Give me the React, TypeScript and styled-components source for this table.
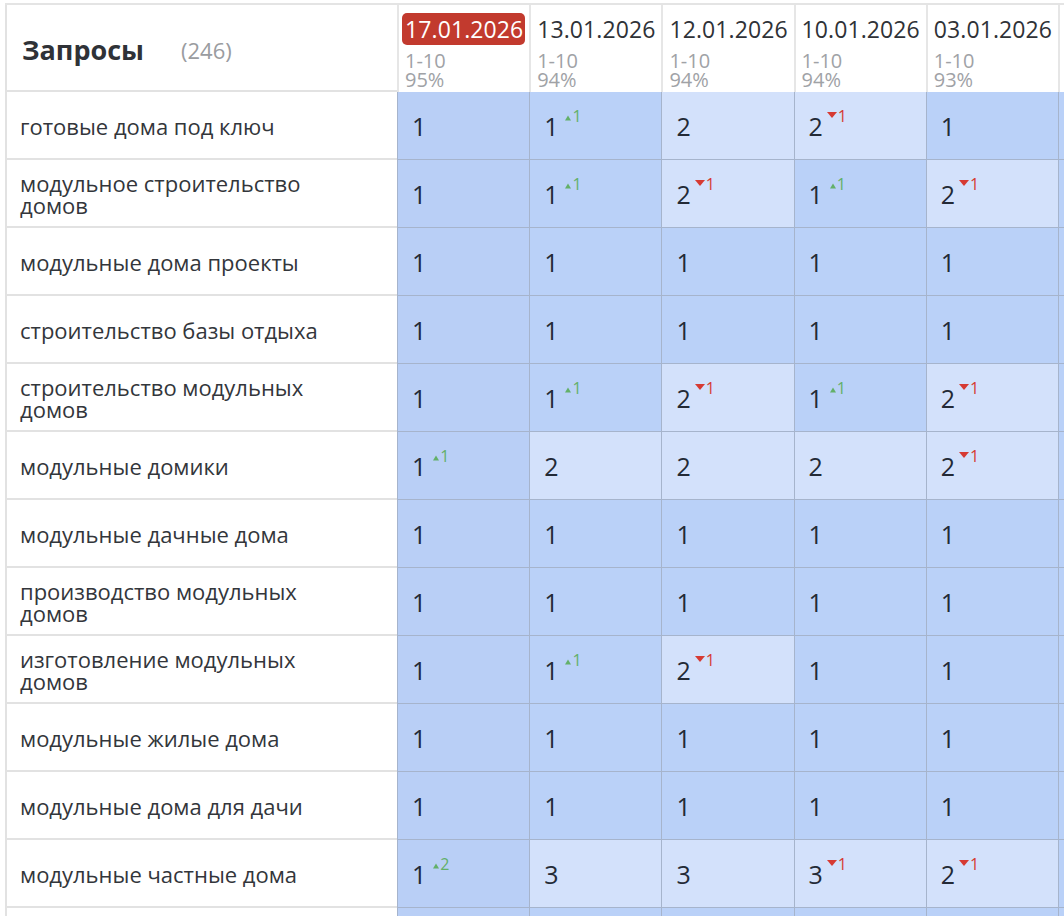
import React from "react";
import styled, { createGlobalStyle } from "styled-components";

const Global = createGlobalStyle`
  html, body { margin: 0; padding: 0; background: #ffffff; }
  body { font-family: "Open Sans", "Noto Sans", "DejaVu Sans", sans-serif; }
  * { box-sizing: border-box; }
`;

const Page = styled.div`
  width: 1064px;
  height: 916px;
  overflow: hidden;
  padding: 3px 0 0 5px;
`;

const Grid = styled.div`
  display: grid;
  grid-template-columns: 392px repeat(6, 132.2px);
  grid-template-rows: 87px;
  grid-auto-rows: 68px;
  width: max-content;
  border-top: 2px solid #e4e4e4;
`;

const QueryHead = styled.div`
  display: flex;
  align-items: center;
  gap: 37px;
  padding: 4px 0 0 15px;
  border-left: 2px solid #e2e2e2;
  border-bottom: 2px solid #e2e2e2;
`;

const Title = styled.span`
  font-size: 27px;
  font-weight: 700;
  color: #2f3237;
`;

const Count = styled.span`
  font-size: 22px;
  color: #9a9ca0;
`;

const DateHead = styled.div`
  display: flex;
  flex-direction: column;
  align-items: flex-start;
  padding: 8px 0 0 6px;
  border-left: 2px solid #e6e6e6;
  overflow: hidden;
`;

const DateLabel = styled.div<{ $current?: boolean }>`
  font-size: 23px;
  line-height: 32px;
  height: 32px;
  letter-spacing: 0.1px;
  color: ${(p) => (p.$current ? "#ffffff" : "#2f3237")};
  background: ${(p) => (p.$current ? "#c23a2e" : "transparent")};
  border-radius: 5px;
  margin-left: ${(p) => (p.$current ? "-3px" : "0")};
  padding: ${(p) => (p.$current ? "0 2px 0 3px" : "0")};
  white-space: nowrap;
`;

const SubInfo = styled.div`
  margin-top: 6px;
  font-size: 20px;
  line-height: 19px;
  color: #a0a2a6;
`;

const SubLine = styled.div`
  height: 19px;
  white-space: nowrap;
`;

const QueryCell = styled.div`
  display: flex;
  align-items: center;
  padding: 2px 48px 0 13px;
  font-size: 22px;
  line-height: 22px;
  color: #33363b;
  border-left: 2px solid #e2e2e2;
  border-bottom: 2px solid #e2e2e2;
`;

const DataCell = styled.div<{ $bg: string }>`
  display: flex;
  align-items: center;
  padding: 0 0 0 14px;
  background: ${(p) => p.$bg};
  border-left: 1px solid #a6b4cc;
  border-bottom: 1px solid #a6b4cc;
`;

const Value = styled.span`
  font-size: 25px;
  color: #232a36;
`;

const Delta = styled.span<{ $up: boolean }>`
  display: inline-flex;
  align-items: center;
  gap: 1px;
  margin: 0 0 19px ${(p) => (p.$up ? "7px" : "4px")};
  font-size: 16px;
  line-height: 16px;
  color: ${(p) => (p.$up ? "#63b069" : "#d63a33")};
`;

type Cell = [number, number | null] | null;
type Row = { q: string; v: Cell[] };

const rows: Row[] = [
  { q: "готовые дома под ключ", v: [[1, null], [1, 1], [2, null], [2, -1], [1, null], null] },
  { q: "модульное строительство домов", v: [[1, null], [1, 1], [2, -1], [1, 1], [2, -1], null] },
  { q: "модульные дома проекты", v: [[1, null], [1, null], [1, null], [1, null], [1, null], null] },
  { q: "строительство базы отдыха", v: [[1, null], [1, null], [1, null], [1, null], [1, null], null] },
  { q: "строительство модульных домов", v: [[1, null], [1, 1], [2, -1], [1, 1], [2, -1], null] },
  { q: "модульные домики", v: [[1, 1], [2, null], [2, null], [2, null], [2, -1], null] },
  { q: "модульные дачные дома", v: [[1, null], [1, null], [1, null], [1, null], [1, null], null] },
  { q: "производство модульных домов", v: [[1, null], [1, null], [1, null], [1, null], [1, null], null] },
  { q: "изготовление модульных домов", v: [[1, null], [1, 1], [2, -1], [1, null], [1, null], null] },
  { q: "модульные жилые дома", v: [[1, null], [1, null], [1, null], [1, null], [1, null], null] },
  { q: "модульные дома для дачи", v: [[1, null], [1, null], [1, null], [1, null], [1, null], null] },
  { q: "модульные частные дома", v: [[1, 2], [3, null], [3, null], [3, -1], [2, -1], null] },
  { q: "", v: [null, null, null, null, null, null] },
];

const dates = [
  { d: "17.01.2026", r: "1-10", p: "95%", current: true },
  { d: "13.01.2026", r: "1-10", p: "94%" },
  { d: "12.01.2026", r: "1-10", p: "94%" },
  { d: "10.01.2026", r: "1-10", p: "94%" },
  { d: "03.01.2026", r: "1-10", p: "93%" },
  { d: "", r: "", p: "" },
];

const cellBg = (c: Cell, col: number) => {
  if (!c || c[0] === 1) return col === 0 ? "#b9cff6" : "#bad1f8";
  return "#d3e1fb";
};

const Arrow = ({ up }: { up: boolean }) =>
  up ? (
    <svg width="6" height="6" viewBox="0 0 6 6" style={{ marginTop: 4 }}>
      <path d="M3 0.5 L6 5.5 L0 5.5 Z" fill="currentColor" />
    </svg>
  ) : (
    <svg width="10" height="6" viewBox="0 0 10 6" style={{ marginBottom: 2 }}>
      <path d="M0 0 L10 0 L5 6 Z" fill="currentColor" />
    </svg>
  );

export default function App() {
  return (
    <Page>
      <Global />
      <Grid>
        <QueryHead>
          <Title>Запросы</Title>
          <Count>(246)</Count>
        </QueryHead>
        {dates.map((d, i) => (
          <DateHead key={i}>
            {d.d && <DateLabel $current={d.current}>{d.d}</DateLabel>}
            {d.r && (
              <SubInfo>
                <SubLine>{d.r}</SubLine>
                <SubLine>{d.p}</SubLine>
              </SubInfo>
            )}
          </DateHead>
        ))}
        {rows.map((r, i) => (
          <React.Fragment key={i}>
            <QueryCell>{r.q}</QueryCell>
            {r.v.map((c, j) => (
              <DataCell key={j} $bg={cellBg(c, j)}>
                {c && <Value>{c[0]}</Value>}
                {c && c[1] !== null && (
                  <Delta $up={c[1] > 0}>
                    <Arrow up={c[1] > 0} />
                    {Math.abs(c[1])}
                  </Delta>
                )}
              </DataCell>
            ))}
          </React.Fragment>
        ))}
      </Grid>
    </Page>
  );
}
